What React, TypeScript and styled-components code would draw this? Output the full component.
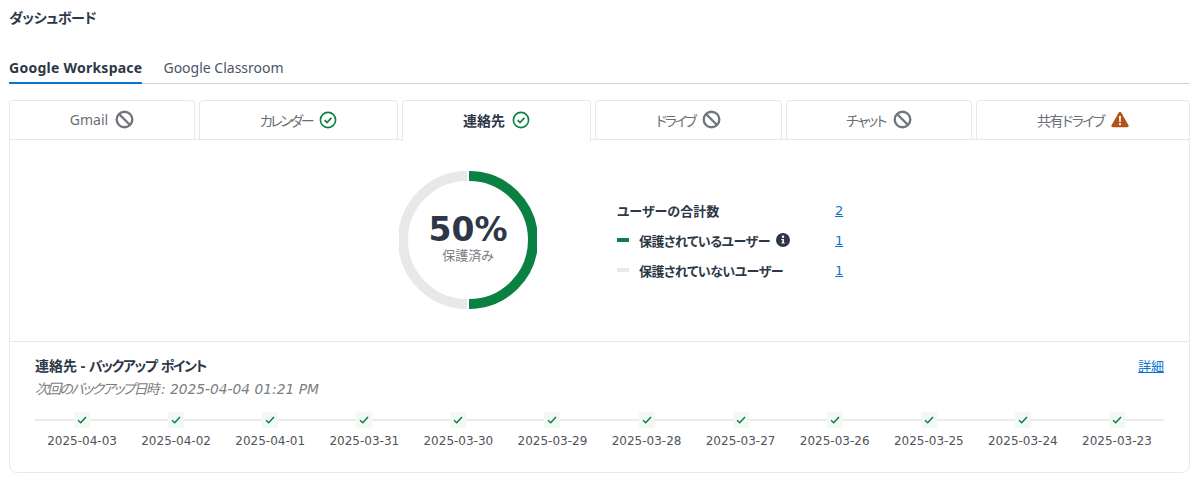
import React from "react";
import styled, { createGlobalStyle } from "styled-components";

const GlobalStyle = createGlobalStyle`
  html, body {
    margin: 0;
    padding: 0;
    background: #fff;
    font-family: "Noto Sans", "Noto Sans CJK JP", sans-serif;
    font-feature-settings: "palt";
    color: #2d3748;
  }
  * { box-sizing: border-box; }
`;

const Page = styled.div`
  width: 1199px;
  height: 481px;
  padding: 0 9px;
  overflow: hidden;
`;

const PageTitle = styled.h1`
  margin: 0;
  padding-top: 8px;
  height: 56px;
  font-size: 14px;
  line-height: 20px;
  font-weight: 700;
  letter-spacing: -0.4px;
  color: #2d3748;
`;

const TopTabs = styled.div`
  display: flex;
  gap: 21px;
  height: 28px;
  border-bottom: 1px solid #d4d4d4;
`;

const TopTab = styled.div<{ $active?: boolean }>`
  height: 28px;
  font-size: 14px;
  line-height: 24px;
  font-weight: ${(p) => (p.$active ? 700 : 400)};
  letter-spacing: ${(p) => (p.$active ? "0.25px" : "0")};
  color: ${(p) => (p.$active ? "#2d3748" : "#4a5568")};
  border-bottom: 2px solid ${(p) => (p.$active ? "#0b74d1" : "transparent")};
`;

const ServiceTabs = styled.div`
  display: flex;
  gap: 4px;
  height: 40px;
  margin-top: 16px;
  width: 1181px;
`;

const ServiceTab = styled.div<{ $active?: boolean; $width: number }>`
  flex: none;
  width: ${(p) => p.$width}px;
  display: flex;
  align-items: center;
  justify-content: center;
  gap: 7px;
  height: ${(p) => (p.$active ? "41px" : "40px")};
  padding-bottom: ${(p) => (p.$active ? "2px" : "1px")};
  position: relative;
  z-index: ${(p) => (p.$active ? 2 : 0)};
  background: #fff;
  border: 1px solid #e8e8e8;
  border-bottom: ${(p) => (p.$active ? "none" : "1px solid #e8e8e8")};
  border-radius: 4px 4px 0 0;
  font-size: 14px;
  font-weight: ${(p) => (p.$active ? 700 : 400)};
  color: ${(p) => (p.$active ? "#2d3748" : "#6b6f76")};
`;

const TabLabel = styled.span<{ $tracking: number }>`
  letter-spacing: ${(p) => p.$tracking}px;
`;

const Panel = styled.div`
  position: relative;
  width: 1181px;
  height: 334px;
  margin-top: -1px;
  border: 1px solid #e8e8e8;
  border-radius: 0 4px 8px 8px;
  background: #fff;
`;

const Summary = styled.div`
  height: 202px;
  display: flex;
  align-items: flex-start;
  padding: 31px 0 0 389px;
  border-bottom: 1px solid #e8e8e8;
`;

const Donut = styled.div`
  position: relative;
  width: 138px;
  height: 138px;
  flex: none;
`;

const DonutLabel = styled.div`
  position: absolute;
  inset: 0;
  padding-bottom: 2px;
  display: flex;
  flex-direction: column;
  align-items: center;
  justify-content: center;
`;

const Percent = styled.div`
  font-family: "DejaVu Sans", sans-serif;
  font-size: 33px;
  line-height: 32px;
  font-weight: 700;
  color: #2d3748;
`;

const Protected = styled.div`
  font-size: 13px;
  line-height: 18px;
  color: #7a7d82;
`;

const Legend = styled.div`
  margin-left: 80px;
  padding-top: 24px;
  display: flex;
  flex-direction: column;
`;

const LegendRow = styled.div`
  display: flex;
  align-items: center;
  height: 30px;
  width: 226px;
  font-size: 13px;
  font-weight: 700;
  color: #2d3748;
`;

const LegendName = styled.div`
  flex: 1;
  display: flex;
  align-items: center;
  gap: 6px;
`;

const LegendText = styled.span`
  letter-spacing: -0.5px;
`;

const Swatch = styled.span<{ $color: string }>`
  width: 12px;
  height: 4px;
  margin-right: 4px;
  background: ${(p) => p.$color};
`;

const CountLink = styled.a`
  width: 8px;
  font-family: "DejaVu Sans", sans-serif;
  font-size: 13px;
  font-weight: 400;
  color: #0b74d1;
  text-decoration: underline;
`;

const Backup = styled.div`
  padding: 14px 25px 0;
`;

const BackupHeader = styled.div`
  display: flex;
  justify-content: space-between;
`;

const BackupTitle = styled.div`
  font-size: 14px;
  line-height: 20px;
  font-weight: 700;
  color: #2d3748;
`;

const Kana = styled.span`
  letter-spacing: -1.4px;
  word-spacing: 2px;
`;

const NextBackup = styled.div`
  margin-top: 3px;
  font-size: 14px;
  line-height: 20px;
  color: #7a7d82;
  font-style: italic;
`;

const NextLabel = styled.span`
  letter-spacing: -1.85px;
`;

const Stamp = styled.span`
  margin-left: 3px;
  font-family: "DejaVu Sans", sans-serif;
  font-size: 13.8px;
`;

const DetailLink = styled.a`
  font-size: 13px;
  line-height: 20px;
  color: #0b74d1;
  text-decoration: underline;
`;

const Timeline = styled.div`
  margin-top: 13px;
  display: grid;
  grid-template-columns: repeat(12, 1fr);
  background: linear-gradient(#ebebeb, #ebebeb) 0 7px / 100% 2px no-repeat;
`;

const Point = styled.div`
  display: flex;
  flex-direction: column;
  align-items: center;
  gap: 3px;
`;

const CheckBox = styled.span`
  width: 16px;
  height: 16px;
  display: flex;
  align-items: center;
  justify-content: center;
  border-radius: 2px;
  background: #f2f8f4;
`;

const DateText = styled.div`
  font-family: "DejaVu Sans", sans-serif;
  font-size: 12px;
  line-height: 20px;
  color: #4f5358;
`;

const BlockedIcon = () => (
  <svg width="19" height="19" viewBox="0 0 19 19" fill="none" stroke="#72767c" strokeWidth="2.4">
    <circle cx="9.5" cy="9.5" r="7.8" />
    <path d="M4 4l11 11" />
  </svg>
);

const OkIcon = () => (
  <svg width="18" height="18" viewBox="0 0 18 18" fill="none" stroke="#0a8043" strokeWidth="1.6">
    <circle cx="9" cy="9" r="7.6" />
    <path d="M5.6 9.2l2.4 2.3 4.4-4.6" strokeWidth="1.7" />
  </svg>
);

const WarnIcon = () => (
  <svg width="18" height="17" viewBox="0 0 18 17">
    <path d="M9 .8c.5 0 .9.2 1.2.7l7.3 12.7c.5.9-.1 2-1.2 2H1.7c-1.1 0-1.7-1.1-1.2-2L7.8 1.5C8.1 1 8.5.8 9 .8z" fill="#b4521a" />
    <path d="M8 5h2l-.3 6H8.3z" fill="#fff" />
    <circle cx="9" cy="13.2" r="1.1" fill="#fff" />
  </svg>
);

const InfoIcon = () => (
  <svg width="14" height="14" viewBox="0 0 14 14">
    <circle cx="7" cy="7" r="7" fill="#2d3748" />
    <circle cx="7" cy="3.8" r="1.2" fill="#fff" />
    <path d="M5.4 5.9h2.5v3.5h.8v1.1H5.4V9.4h.9V7h-.9z" fill="#fff" />
  </svg>
);

const SmallCheck = () => (
  <svg width="10" height="8" viewBox="0 0 10 8" fill="none" stroke="#0a8043" strokeWidth="1.5">
    <path d="M1 4.2l2.7 2.5L9 1" />
  </svg>
);

const services = [
  { name: "Gmail", status: "blocked", width: 186, tracking: 0 },
  { name: "カレンダー", status: "ok", width: 199, tracking: -2.4 },
  { name: "連絡先", status: "ok", width: 189, tracking: 0, active: true },
  { name: "ドライブ", status: "blocked", width: 187, tracking: -2.2 },
  { name: "チャット", status: "blocked", width: 186, tracking: -1.5 },
  { name: "共有ドライブ", status: "warn", width: 214, tracking: -1.5 },
];

const dates = [
  "2025-04-03",
  "2025-04-02",
  "2025-04-01",
  "2025-03-31",
  "2025-03-30",
  "2025-03-29",
  "2025-03-28",
  "2025-03-27",
  "2025-03-26",
  "2025-03-25",
  "2025-03-24",
  "2025-03-23",
];

export default function App() {
  return (
    <Page>
      <GlobalStyle />
      <PageTitle>ダッシュボード</PageTitle>

      <TopTabs>
        <TopTab $active>Google Workspace</TopTab>
        <TopTab>Google Classroom</TopTab>
      </TopTabs>

      <ServiceTabs>
        {services.map((s) => (
          <ServiceTab key={s.name} $active={s.active} $width={s.width}>
            <TabLabel $tracking={s.tracking}>{s.name}</TabLabel>
            {s.status === "blocked" && <BlockedIcon />}
            {s.status === "ok" && <OkIcon />}
            {s.status === "warn" && <WarnIcon />}
          </ServiceTab>
        ))}
      </ServiceTabs>

      <Panel>
        <Summary>
          <Donut>
            <svg width="138" height="138" viewBox="0 0 138 138" fill="none" strokeWidth="10">
              <path d="M68 5A64 64 0 0 0 68 133" stroke="#e7e8ea" />
              <path d="M70 5A64 64 0 0 1 70 133" stroke="#0a8043" />
            </svg>
            <DonutLabel>
              <Percent>50%</Percent>
              <Protected>保護済み</Protected>
            </DonutLabel>
          </Donut>

          <Legend>
            <LegendRow>
              <LegendName>ユーザーの合計数</LegendName>
              <CountLink>2</CountLink>
            </LegendRow>
            <LegendRow>
              <LegendName>
                <Swatch $color="#0a8043" />
                <LegendText>保護されているユーザー</LegendText>
                <InfoIcon />
              </LegendName>
              <CountLink>1</CountLink>
            </LegendRow>
            <LegendRow>
              <LegendName>
                <Swatch $color="#e7e8ea" />
                <LegendText>保護されていないユーザー</LegendText>
              </LegendName>
              <CountLink>1</CountLink>
            </LegendRow>
          </Legend>
        </Summary>

        <Backup>
          <BackupHeader>
            <BackupTitle>
              連絡先 - <Kana>バックアップ ポイント</Kana>
            </BackupTitle>
            <DetailLink>詳細</DetailLink>
          </BackupHeader>
          <NextBackup>
            <NextLabel>次回のバックアップ日時</NextLabel>
            <Stamp>: 2025-04-04 01:21 PM</Stamp>
          </NextBackup>
          <Timeline>
            {dates.map((d) => (
              <Point key={d}>
                <CheckBox>
                  <SmallCheck />
                </CheckBox>
                <DateText>{d}</DateText>
              </Point>
            ))}
          </Timeline>
        </Backup>
      </Panel>
    </Page>
  );
}
